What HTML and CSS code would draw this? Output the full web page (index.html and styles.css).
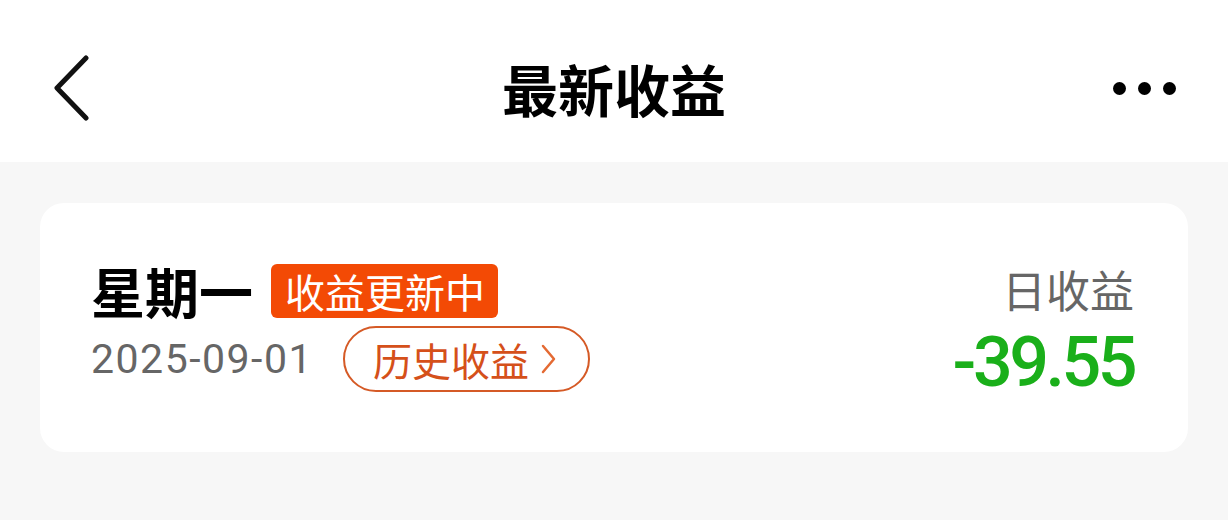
FILE: index.html
```html
<!DOCTYPE html>
<html lang="zh-CN">
<head>
    <meta charset="UTF-8">
    <meta name="viewport" content="width=device-width, initial-scale=1.0">
    <title>最新收益</title>
    <link rel="stylesheet" href="styles.css">
</head>
<body>
    <header class="topbar">
        <button class="back" aria-label="返回">
            <svg width="40" height="66" viewBox="0 0 40 66"><path d="M34 3 L5 33 L34 63" fill="none" stroke="#111" stroke-width="5" stroke-linecap="round" stroke-linejoin="round"/></svg>
        </button>
        <h1>最新收益</h1>
        <button class="more" aria-label="更多">
            <span></span><span></span><span></span>
        </button>
    </header>
    <main class="page">
        <div class="card">
            <div class="left">
                <div class="day-row">
                    <span class="day">星期一</span>
                    <span class="badge">收益更新中</span>
                </div>
                <div class="date-row">
                    <span class="date">2025-09-01</span>
                    <a class="history" href="#">历史收益
                        <svg width="18" height="32" viewBox="0 0 18 32"><path d="M4 3 L15 16 L4 29" fill="none" stroke="#e46a33" stroke-width="2.5" stroke-linecap="round" stroke-linejoin="round"/></svg>
                    </a>
                </div>
            </div>
            <div class="right">
                <div class="label">日收益</div>
                <div class="amount">-39.55</div>
            </div>
        </div>
    </main>
</body>
</html>
```

FILE: styles.css
```css
* {
    box-sizing: border-box;
}
body {
    margin: 0;
    font-family: "Noto Sans CJK SC", "Noto Sans", sans-serif;
    background-color: #f7f7f7;
    height: 520px;
}
.topbar {
    height: 162px;
    background-color: #fff;
    display: flex;
    align-items: center;
    justify-content: space-between;
    padding: 14px 52px 0 52px;
}
.topbar h1 {
    margin: 0;
    font-size: 56px;
    font-weight: 700;
    color: #000;
    line-height: 1;
}
.back, .more {
    background: none;
    border: none;
    padding: 0;
    width: 64px;
    display: flex;
    align-items: center;
}
.back {
    justify-content: flex-start;
}
.more {
    justify-content: flex-end;
    gap: 12px;
}
.more span {
    width: 13px;
    height: 13px;
    border-radius: 50%;
    background-color: #000;
}
.page {
    padding: 41px 40px;
}
.card {
    background-color: #fff;
    border-radius: 24px;
    height: 249px;
    padding: 0 54px 0 51px;
    display: flex;
    align-items: center;
    justify-content: space-between;
}
.left {
    display: flex;
    flex-direction: column;
    gap: 8px;
}
.day-row, .date-row {
    display: flex;
    align-items: center;
}
.day {
    font-size: 54px;
    font-weight: 700;
    color: #000;
    line-height: 1;
    margin-right: 18px;
}
.badge {
    background-color: #f34a05;
    color: #fff;
    font-size: 40px;
    line-height: 54px;
    height: 54px;
    padding: 0 13px 0 14px;
    border-radius: 6px;
}
.date {
    font-family: Roboto, "Noto Sans CJK SC", sans-serif;
    font-size: 41px;
    letter-spacing: 1.5px;
    color: #666;
    margin-right: 30px;
}
.history {
    display: flex;
    align-items: center;
    gap: 10px;
    height: 66px;
    padding: 0 31px 0 28px;
    border: 2px solid #d55a26;
    border-radius: 33px;
    color: #d5501a;
    font-size: 39px;
    text-decoration: none;
}
.right {
    display: flex;
    flex-direction: column;
    align-items: flex-end;
    gap: 16px;
    padding-top: 9px;
}
.label {
    font-size: 44px;
    color: #666;
    line-height: 1;
}
.amount {
    font-family: Roboto, "Noto Sans", sans-serif;
    font-size: 70px;
    font-weight: 500;
    letter-spacing: -3.5px;
    color: #1aaf1a;
    line-height: 1;
}
```
